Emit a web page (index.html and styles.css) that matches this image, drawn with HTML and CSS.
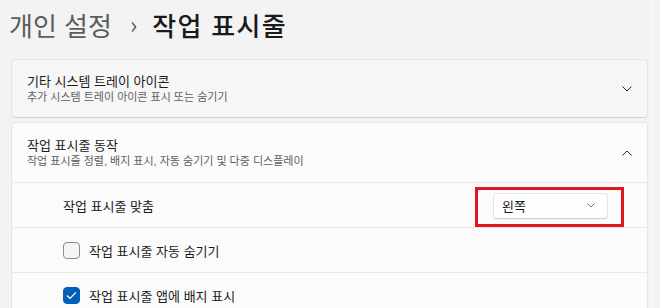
FILE: index.html
```html
<!DOCTYPE html>
<html lang="ko">
<head>
<meta charset="utf-8">
<link rel="stylesheet" href="styles.css">
</head>
<body>
<div class="page">
  <h1 class="crumb"><span class="crumb-parent">개인 설정</span><span class="crumb-sep">›</span><span class="crumb-current">작업 표시줄</span></h1>

  <div class="card card-collapsed">
    <div class="card-head">
      <div class="head-text">
        <div class="head-title">기타 시스템 트레이 아이콘</div>
        <div class="head-sub">추가 시스템 트레이 아이콘 표시 또는 숨기기</div>
      </div>
      <svg class="chev" width="10" height="6" viewBox="0 0 10 6"><path d="M0.5 0.5 L5 5 L9.5 0.5" fill="none" stroke="#2b2b2b" stroke-width="1"/></svg>
    </div>
  </div>

  <div class="card card-open">
    <div class="card-head head-open">
      <div class="head-text">
        <div class="head-title">작업 표시줄 동작</div>
        <div class="head-sub">작업 표시줄 정렬, 배지 표시, 자동 숨기기 및 다중 디스플레이</div>
      </div>
      <svg class="chev" width="10" height="6" viewBox="0 0 10 6"><path d="M0.5 5.5 L5 1 L9.5 5.5" fill="none" stroke="#2b2b2b" stroke-width="1"/></svg>
    </div>
    <div class="row">
      <span class="row-label">작업 표시줄 맞춤</span>
      <div class="highlight">
        <div class="combo">
          <span class="combo-text">왼쪽</span>
          <svg width="8" height="5" viewBox="0 0 8 5"><path d="M0.5 0.5 L4 4 L7.5 0.5" fill="none" stroke="#6b6b6b" stroke-width="1"/></svg>
        </div>
      </div>
    </div>
    <div class="row">
      <span class="box"></span>
      <span class="row-label">작업 표시줄 자동 숨기기</span>
    </div>
    <div class="row">
      <span class="box box-on"><svg width="11" height="9" viewBox="0 0 11 9"><path d="M1 4.6 L4 7.4 L10 1.4" fill="none" stroke="#fff" stroke-width="1.3"/></svg></span>
      <span class="row-label">작업 표시줄 앱에 배지 표시</span>
    </div>
  </div>
</div>
<div class="scroll-track"></div>
</body>
</html>
```

FILE: styles.css
```css
html, body {
  margin: 0;
  height: 100%;
  overflow: hidden;
}
body {
  background: #f3f3f3;
  font-family: "Noto Sans CJK KR", "Noto Sans", sans-serif;
  color: #1b1b1b;
}
.page {
  padding: 0 12px 0 11px;
}
.crumb {
  margin: 0 0 0 -2px;
  padding: 1px 0 0 0;
  height: 49px;
  box-sizing: border-box;
  font-size: 26px;
  line-height: 34px;
  font-weight: 500;
  display: flex;
  align-items: center;
}
.crumb-parent {
  color: #5c5c5c;
  font-weight: 400;
}
.crumb-sep {
  color: #5c5c5c;
  font-size: 24px;
  line-height: 34px;
  margin: -2px 15px 0 18px;
  font-weight: 400;
}
.crumb-current {
  color: #1a1a1a;
  letter-spacing: 1.3px;
}
.card {
  border: 1px solid #e5e5e5;
  border-radius: 4px;
  margin-top: 10px;
}
.card-collapsed {
  background: #f6f6f6;
  border-bottom-color: #d6d6d6;
}
.card-open {
  background: #fbfbfb;
  margin-top: 4px;
}
.card-head {
  height: 57px;
  display: flex;
  align-items: center;
  justify-content: space-between;
  padding: 0 15px 0 15px;
}
.head-open {
  height: 59px;
  border-bottom: 1px solid #e8e8e8;
}
.head-text {
  display: flex;
  flex-direction: column;
  font-family: "Liberation Sans", "Noto Sans CJK KR", sans-serif;
}
.head-title {
  font-size: 13px;
  line-height: 15px;
  padding-bottom: 1px;
  color: #1b1b1b;
}
.head-sub {
  font-size: 11px;
  line-height: 14px;
  color: #5f5f5f;
}
.chev {
  display: block;
}
.row {
  height: 44px;
  border-bottom: 1px solid #e8e8e8;
  display: flex;
  align-items: center;
  padding: 0 23px 0 51px;
  gap: 8px;
  font-size: 13px;
  color: #1b1b1b;
}
.row-label {
  flex: 1;
}
.highlight {
  border: 3px solid #e3141b;
  padding: 3px 13px 5px 15px;
  margin-top: 3px;
}
.combo {
  width: 93px;
  height: 24px;
  background: #fefefe;
  border: 1px solid #e6e6e6;
  border-bottom-color: #d2d2d2;
  border-radius: 4px;
  display: flex;
  align-items: center;
  justify-content: space-between;
  padding: 0 12px 0 8px;
  box-shadow: 0 1px 1px rgba(0,0,0,0.04);
}
.combo-text {
  font-size: 13px;
  color: #1b1b1b;
}
.combo svg {
  display: block;
}
.box {
  width: 15px;
  height: 15px;
  border: 1px solid #8d8d8d;
  border-radius: 4px;
  background: #f4f4f4;
  display: flex;
  align-items: center;
  justify-content: center;
  flex: none;
  margin-right: 1px;
}
.box-on {
  background: #005fb8;
  border-color: #005fb8;
}
.box-on svg {
  display: block;
}
.scroll-track {
  position: absolute;
  top: 0;
  right: 6px;
  width: 3px;
  height: 100%;
  background: #f8f8f8;
}
```
